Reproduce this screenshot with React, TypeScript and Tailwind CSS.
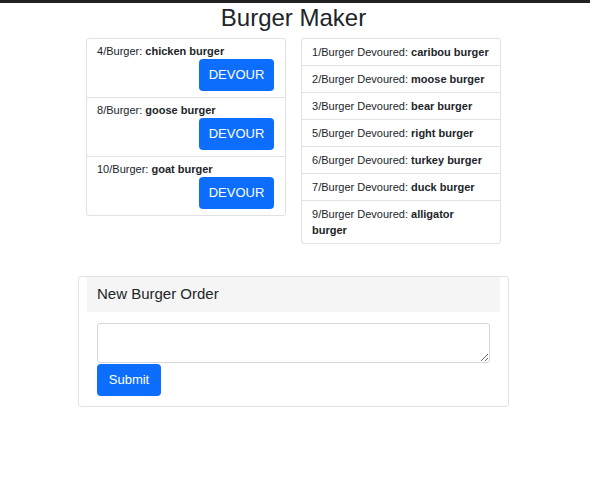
import { useState } from "react";

type Burger = { id: number; name: string };

const waiting: Burger[] = [
  { id: 4, name: "chicken burger" },
  { id: 8, name: "goose burger" },
  { id: 10, name: "goat burger" },
];

const devoured: Burger[] = [
  { id: 1, name: "caribou burger" },
  { id: 2, name: "moose burger" },
  { id: 3, name: "bear burger" },
  { id: 5, name: "right burger" },
  { id: 6, name: "turkey burger" },
  { id: 7, name: "duck burger" },
  { id: 9, name: "alligator burger" },
];

export default function App() {
  const [order, setOrder] = useState("");

  return (
    <div className="min-h-[480px] bg-white text-[#212529] font-['Liberation_Sans',Arial,sans-serif]">
      <div className="h-[3px] bg-[#222]" />
      <div className="ml-[78px] w-[431px]">
        <h1 className="mt-[1px] text-center text-[24px] leading-7">Burger Maker</h1>

        <div className="mt-[6px] flex items-start gap-[15px] px-2">
          <ul className="w-[200px] rounded-[3px] border border-[#e2e2e2]">
            {waiting.map((b, i) => (
              <li
                key={b.id}
                className={`px-[10px] pt-[4px] pb-[6px] ${i > 0 ? "border-t border-[#e2e2e2]" : ""}`}
              >
                <p className="text-[11px] leading-4">
                  {b.id}/Burger: <b>{b.name}</b>
                </p>
                <div className="flex justify-end pr-[1px]">
                  <button className="h-[32px] w-[75px] rounded-[4px] bg-[#0d6efd] text-[13px] text-white">
                    DEVOUR
                  </button>
                </div>
              </li>
            ))}
          </ul>

          <ul className="w-[200px] rounded-[3px] border border-[#e2e2e2]">
            {devoured.map((b, i) => (
              <li
                key={b.id}
                className={`px-[10px] py-[5px] text-[11px] leading-4 ${i > 0 ? "border-t border-[#e2e2e2]" : ""}`}
              >
                {b.id}/Burger Devoured: <b>{b.name}</b>
              </li>
            ))}
          </ul>
        </div>

        <div className="mt-8 rounded-[3px] border border-[#e2e2e2] px-2 pb-[10px]">
          <div className="flex h-[35px] items-center bg-[#f5f5f5] px-[10px] text-[15px]">
            New Burger Order
          </div>
          <div className="px-[10px] pt-[11px]">
            <textarea
              value={order}
              onChange={(e) => setOrder(e.target.value)}
              className="block h-[40px] w-full rounded-[3px] border border-[#d3d8de] px-2 py-1 text-[13px] outline-none"
            />
            <button className="mt-[1px] h-[32px] w-[64px] rounded-[4px] bg-[#0d6efd] text-[13px] text-white">
              Submit
            </button>
          </div>
        </div>
      </div>
    </div>
  );
}
